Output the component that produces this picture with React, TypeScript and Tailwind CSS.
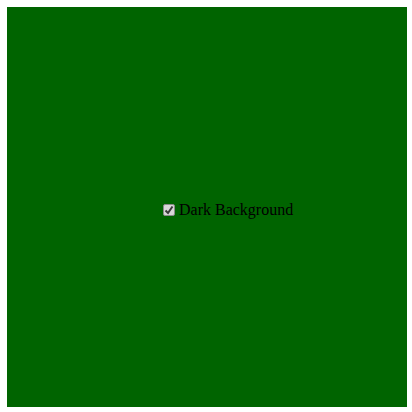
import React from "react";

export default function App() {
  return (
    <div className="w-[412px] h-[412px] bg-white p-[7px]">
      <div className="w-[400px] h-[400px] bg-[#006400] flex items-center pl-[156px] pt-[5px]">
        <label className="flex items-center gap-[4px] text-black text-[16px] leading-[18px]" style={{ fontFamily: '"Liberation Serif", "DejaVu Serif", serif' }}>
          <span className="w-[12px] h-[12px] bg-[#d8d8d8] border border-[#8a8a8a] rounded-[2px] flex items-center justify-center">
            <svg width="10" height="10" viewBox="0 0 10 10">
              <path d="M1.5 5.5 L4 8 L8.5 1.5" fill="none" stroke="#3a3a3a" strokeWidth="2" />
            </svg>
          </span>
          <span>Dark Background</span>
        </label>
      </div>
    </div>
  );
}
